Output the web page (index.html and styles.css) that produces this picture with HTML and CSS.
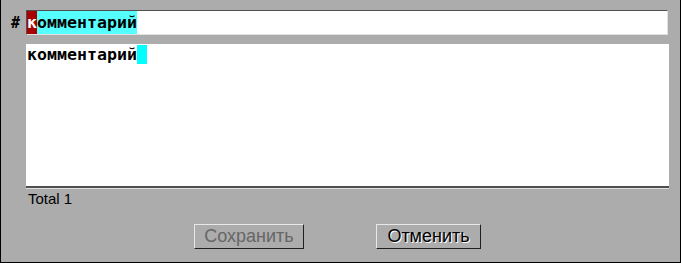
FILE: index.html
```html
<!DOCTYPE html>
<html lang="ru">

<head>
    <meta charset="UTF-8">
    <meta name="viewport" content="width=device-width, initial-scale=1.0">
    <title>Комментарий</title>
    <link rel="stylesheet" href="styles.css">
</head>

<body>

    <div class="window">
        <div class="title-row">
            <span class="hash">#</span>
            <div class="field">
                <span class="sel-start">к</span><span class="sel">омментарий</span>
            </div>
        </div>

        <div class="memo">
            <div class="memo-line">комментарий<span class="cursor"> </span></div>
        </div>

        <div class="total">Total 1</div>

        <div class="button-row">
            <button class="btn btn-disabled" disabled>Сохранить</button>
            <button class="btn btn-cancel">Отменить</button>
        </div>
    </div>

</body>

</html>
```

FILE: styles.css
```css
body {
    margin: 0;
    background-color: #acacac;
    font-family: "Liberation Sans", Arial, sans-serif;
}

.window {
    width: 679px;
    height: 262px;
    border: 1px solid #000;
    border-top: none;
    background-color: #acacac;
    display: flex;
    flex-direction: column;
}

.title-row {
    display: flex;
    align-items: center;
    margin-top: 10px;
}

.hash {
    width: 25px;
    padding-right: 6px;
    box-sizing: border-box;
    text-align: right;
    font-family: "DejaVu Sans Mono", monospace;
    font-weight: bold;
    font-size: 15px;
    color: #000;
}

.field {
    width: 642px;
    height: 25px;
    box-sizing: border-box;
    background-color: #fff;
    border-top: 1px solid #505050;
    border-left: 1px solid #505050;
    border-bottom: 1px solid #e0e0e0;
    border-right: 1px solid #e0e0e0;
    display: flex;
    font-family: "DejaVu Sans Mono", monospace;
    font-weight: bold;
    font-size: 16.6px;
    line-height: 23px;
    white-space: pre;
}

.sel-start {
    background-color: #a80000;
    color: #fff;
}

.sel {
    background-color: #55ffff;
    color: #000;
}

.memo {
    margin-top: 9px;
    margin-left: 25px;
    width: 643px;
    height: 144px;
    box-sizing: border-box;
    background-color: #fff;
    border-bottom: 2px solid #505050;
    box-shadow: 0 1px 0 #e0e0e0;
}

.memo-line {
    font-family: "DejaVu Sans Mono", monospace;
    font-weight: bold;
    font-size: 16.6px;
    line-height: 22px;
    white-space: pre;
    color: #000;
    padding-left: 1px;
}

.cursor {
    background-color: #00ffff;
}

.total {
    margin-top: 2px;
    padding-left: 27px;
    font-size: 15px;
    line-height: 18px;
    color: #000;
}

.button-row {
    display: flex;
    gap: 72px;
    padding-left: 193px;
    margin-top: 16px;
}

.btn {
    height: 25px;
    padding: 0;
    font-family: "Liberation Sans", Arial, sans-serif;
    font-size: 18px;
    line-height: 21px;
    background-color: #acacac;
    border-top: 1px solid #e8e8e8;
    border-left: 1px solid #e8e8e8;
    border-bottom: 1px solid #202020;
    border-right: 1px solid #202020;
    border-radius: 0;
}

.btn-disabled {
    width: 110px;
    color: #666;
}

.btn-cancel {
    width: 105px;
    color: #000;
    text-shadow: 1px 1px 0 #fff;
}
```
